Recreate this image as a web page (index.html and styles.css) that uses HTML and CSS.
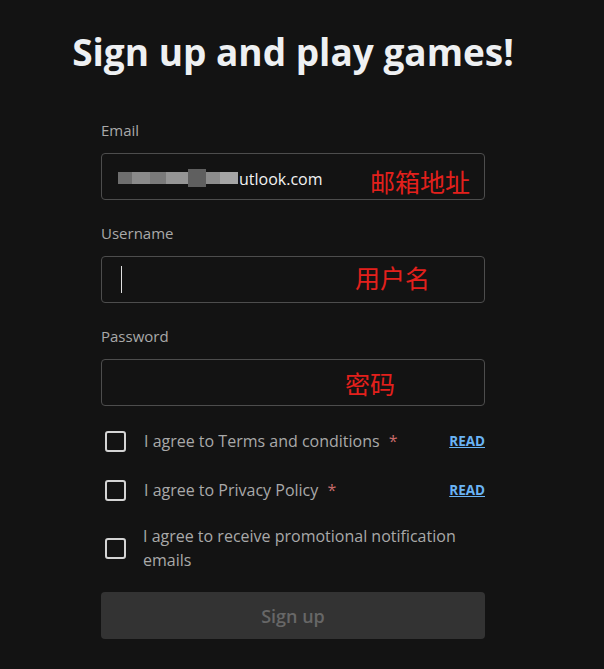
FILE: index.html
```html
<!DOCTYPE html>
<html lang="en">
<head>
  <meta charset="UTF-8">
  <meta name="viewport" content="width=device-width, initial-scale=1.0">
  <title>Sign up</title>
  <link rel="stylesheet" href="styles.css">
</head>
<body>
  <div class="page">
    <h1>Sign up and play games!</h1>

    <form class="signup">
      <!-- Email -->
      <div class="field">
        <label>Email</label>
        <div class="input">
          <span class="mosaic">
            <i class="m1"></i><i class="m2"></i><i class="m3"></i><i class="m4"></i><i class="m5"></i><i class="m6"></i><i class="m7"></i>
          </span><span class="value">utlook.com</span>
          <span class="note note-email">邮箱地址</span>
        </div>
      </div>

      <!-- Username -->
      <div class="field">
        <label>Username</label>
        <div class="input">
          <span class="caret"></span>
          <span class="note note-user">用户名</span>
        </div>
      </div>

      <!-- Password -->
      <div class="field">
        <label>Password</label>
        <div class="input">
          <span class="note note-pass">密码</span>
        </div>
      </div>

      <!-- Agreements -->
      <div class="checks">
        <div class="check">
          <span class="box"></span>
          <span class="text">I agree to Terms and conditions <em>*</em></span>
          <a href="#" class="read">READ</a>
        </div>
        <div class="check">
          <span class="box"></span>
          <span class="text">I agree to Privacy Policy <em>*</em></span>
          <a href="#" class="read">READ</a>
        </div>
        <div class="check check-tall">
          <span class="box"></span>
          <span class="text">I agree to receive promotional notification emails</span>
        </div>
      </div>

      <button type="button" class="btn" disabled>Sign up</button>
    </form>
  </div>
</body>
</html>
```

FILE: styles.css
```css
:root {
  --bg: #131313;
  --text: #ececec;
  --muted: #a9a9a9;
  --border: #4d4d4d;
  --link: #6ab4f5;
  --note: #e3201c;
}

* {
  margin: 0;
  padding: 0;
  box-sizing: border-box;
}

body {
  font-family: 'Open Sans', 'Noto Sans CJK SC', sans-serif;
  background: var(--bg);
  color: var(--text);
}

.page {
  width: 604px;
  height: 669px;
  padding-top: 27px;
}

h1 {
  width: 586px;
  font-size: 37px;
  font-weight: 700;
  line-height: 50px;
  text-align: center;
  color: #eef0f2;
}

.signup {
  width: 384px;
  margin: 43px 0 0 101px;
}

/* Fields */
.field {
  margin-bottom: 23px;
}

.field label {
  display: block;
  font-size: 15px;
  line-height: 20px;
  color: var(--muted);
  margin-bottom: 13px;
}

.input {
  position: relative;
  height: 47px;
  border: 1px solid var(--border);
  border-radius: 4px;
  display: flex;
  align-items: center;
  padding-left: 16px;
}

.value {
  font-size: 16px;
  color: #f2f2f2;
  margin-top: 4px;
}

.mosaic {
  display: flex;
  align-items: center;
  height: 20px;
  margin-right: 1px;
  margin-top: 2px;
}

.mosaic i {
  display: block;
  height: 12px;
}

.m1 { width: 14px; background: #6e6e6e; }
.m2 { width: 18px; background: #8a8a8a; }
.m3 { width: 16px; background: #7a7a7a; }
.m4 { width: 22px; background: #959595; }
.m5 { width: 18px; background: #5f5f5f; height: 18px !important; }
.m6 { width: 14px; background: #8c8c8c; }
.m7 { width: 18px; background: #a5a5a5; }

.caret {
  width: 1px;
  height: 27px;
  background: #e0e0e0;
  margin-left: 3px;
}

/* Red annotations drawn over the inputs */
.note {
  position: absolute;
  top: 50%;
  transform: translateY(-50%);
  font-family: 'Noto Sans CJK SC', sans-serif;
  font-size: 25px;
  line-height: 30px;
  color: var(--note);
}

.note-email { left: 268px; margin-top: 4px; }
.note-user { left: 253px; margin-top: -3px; }
.note-pass { left: 243px; }

/* Checkboxes */
.checks {
  margin-top: 20px;
}

.check {
  display: flex;
  align-items: center;
  height: 24px;
  margin-bottom: 25px;
}

.check + .check-tall {
  margin-top: -3px;
}

.check-tall {
  height: 48px;
  margin-bottom: 20px;
}

.box {
  flex: none;
  width: 21px;
  height: 21px;
  border: 2px solid #d4d4d4;
  border-radius: 3px;
  margin-left: 4px;
  margin-right: 18px;
}

.text {
  flex: 1;
  font-size: 16px;
  line-height: 24px;
  color: var(--muted);
}

.check-tall .text {
  padding-right: 10px;
  margin-left: -1px;
}

.text em {
  font-style: normal;
  color: #c76a6a;
  margin-left: 5px;
}

.read {
  font-size: 13.5px;
  font-weight: 700;
  color: var(--link);
  text-decoration: underline;
}

/* Button */
.btn {
  display: block;
  width: 100%;
  height: 47px;
  border: none;
  border-radius: 4px;
  background: #333333;
  color: #676767;
  font-family: 'Open Sans', sans-serif;
  font-size: 18px;
  font-weight: 600;
}
```
